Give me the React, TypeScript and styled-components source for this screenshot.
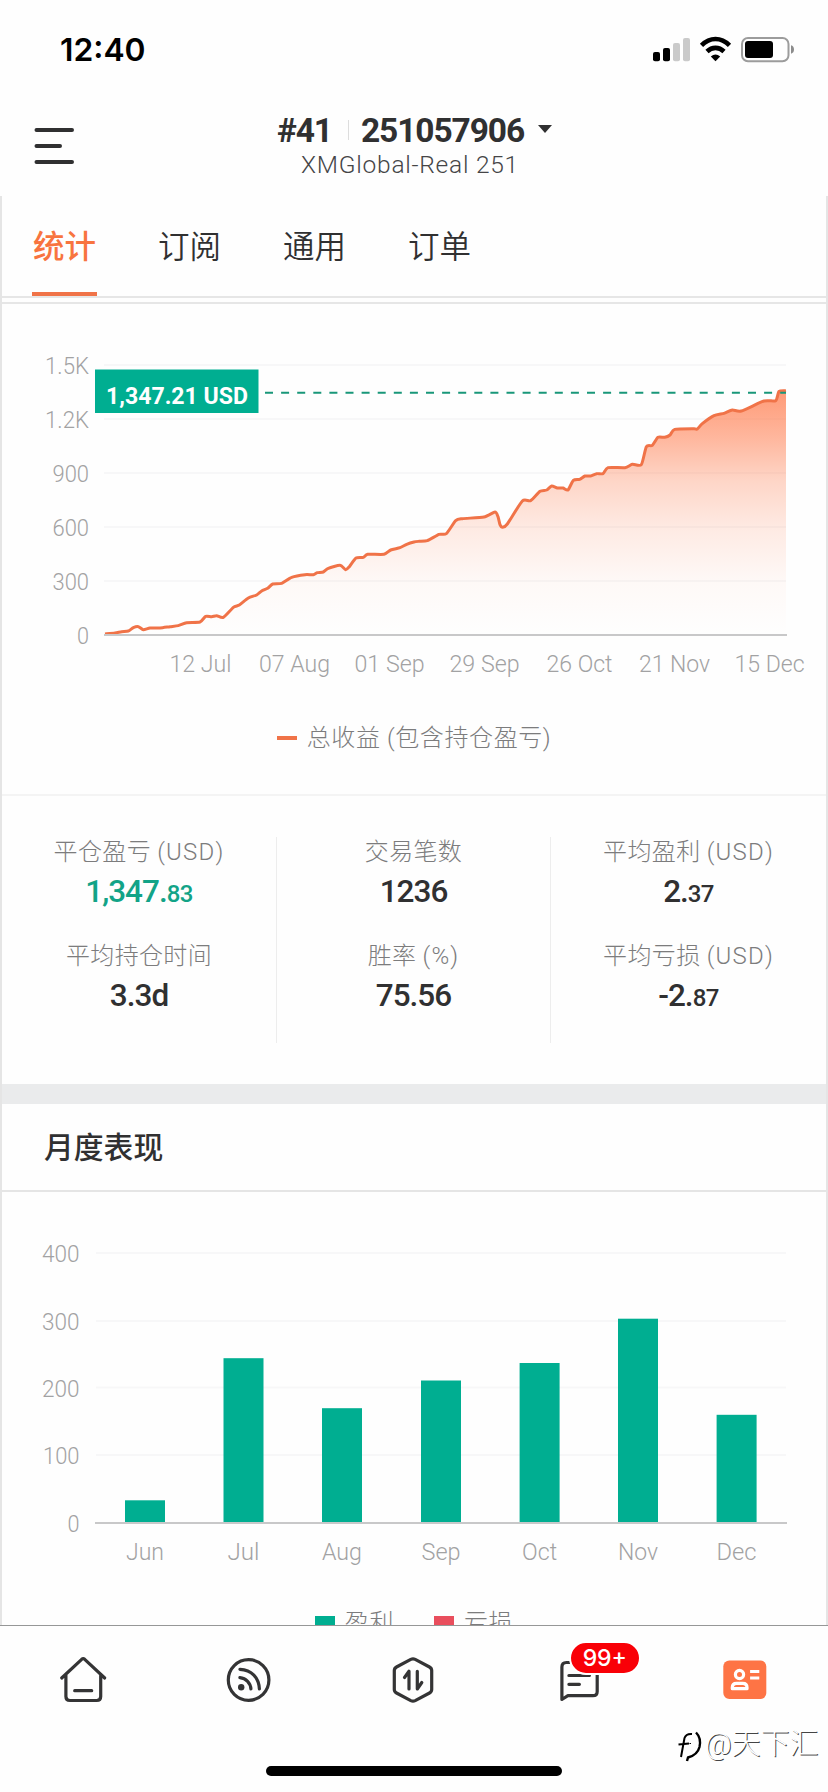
import React from "react";
import styled, { createGlobalStyle } from "styled-components";

const GREEN = "#00ae91";
const ORANGE = "#f07348";
const INK = "#303031";

const GlobalStyle = createGlobalStyle`
  * { box-sizing: border-box; }
  body {
    margin: 0;
    background: #fff;
    font-family: Roboto, "Noto Sans CJK SC", sans-serif;
    color: ${INK};
  }
`;

const Screen = styled.div`
  width: 828px;
  height: 1792px;
  display: flex;
  flex-direction: column;
  overflow: hidden;
  background: #fefefe;
`;

const StatusBar = styled.header`
  height: 98px;
  flex: none;
  display: flex;
  justify-content: space-between;
  padding: 30px 33px 0 60px;
`;

const Clock = styled.div`
  font: 600 31.8px/40px Inter, sans-serif;
  color: #000;
  letter-spacing: 0;
`;

const StatusIcons = styled.svg`
  width: 144px;
  height: 40px;
`;

const TitleBar = styled.div`
  height: 98px;
  flex: none;
  display: grid;
  grid-template-columns: 150px 1fr 150px;
`;

const MenuIcon = styled.svg`
  width: 48px;
  height: 44px;
  margin: 26px 0 0 30px;
`;

const Account = styled.div`
  display: flex;
  flex-direction: column;
  align-items: center;
  padding-top: 12px;
`;

const AccountLine = styled.div`
  display: flex;
  align-items: center;
  height: 40px;
  font-size: 33.5px;
  font-weight: 700;
  letter-spacing: -1.1px;
  padding-left: 1px;
  white-space: nowrap;
`;

const AccountDivider = styled.span`
  width: 1px;
  height: 20px;
  margin: 0 12px 0 16px;
  background: #ddd;
`;

const Caret = styled.svg`
  width: 14px;
  height: 8px;
  margin: -3px 0 0 14px;
`;

const Server = styled.div`
  font-size: 24.5px;
  line-height: 30px;
  font-weight: 300;
  color: #454547;
  letter-spacing: 0.75px;
  margin-right: 8px;
`;

const Panel = styled.main`
  flex: none;
  height: 1429px;
  overflow: hidden;
  border: solid #e5e5e5;
  border-width: 0 2px;
`;

const Tabs = styled.nav`
  height: 102px;
  display: flex;
  gap: 60px;
  padding-left: 30px;
  border-bottom: 2px solid #e6e6e6;
`;

const Tab = styled.div<{ $active?: boolean }>`
  width: 65px;
  height: 100px;
  padding-top: 28px;
  text-align: center;
  white-space: nowrap;
  font-size: 31.5px;
  line-height: 48px;
  font-weight: ${(p) => (p.$active ? 500 : 350)};
  color: ${(p) => (p.$active ? "#f8743f" : INK)};
  border-bottom: ${(p) => (p.$active ? `4px solid ${ORANGE}` : "none")};
`;

const ProfitSection = styled.section`
  margin-top: 4px;
  height: 494px;
  border-top: 2px solid #e6e6e6;
  border-bottom: 2px solid #f4f4f4;
`;

const ChartSvg = styled.svg`
  display: block;
  width: 824px;
  font-family: Roboto, sans-serif;
`;

const Legend = styled.div<{ $gap: number }>`
  display: flex;
  justify-content: center;
  align-items: center;
  gap: ${(p) => p.$gap}px;
  height: 38px;
  font-size: 24px;
  font-weight: 300;
  letter-spacing: 0.6px;
  color: #7c7c7d;
  line-height: 38px;
`;

const LegendItem = styled.div<{ $gap: number }>`
  display: flex;
  align-items: center;
  gap: ${(p) => p.$gap}px;
`;

const Swatch = styled.span<{ $color: string; $height: number }>`
  width: 20px;
  height: ${(p) => p.$height}px;
  background: ${(p) => p.$color};
`;

const Stats = styled.section`
  height: 288px;
  padding-top: 41px;
  display: grid;
  grid-template-columns: 274px 274px 276px;
`;

const StatColumn = styled.div`
  height: 206px;
  text-align: center;
  & + & {
    border-left: 1px solid #ededed;
  }
`;

const Stat = styled.div`
  height: 104px;
`;

const StatLabel = styled.div`
  font-size: 24px;
  line-height: 30px;
  font-weight: 300;
  letter-spacing: 0.35px;
  color: #7c7c7d;
`;

const Unit = styled.span`
  letter-spacing: 1.2px;
`;

const StatValue = styled.div<{ $positive?: boolean }>`
  margin-top: 5px;
  font-size: 31.5px;
  line-height: 40px;
  font-weight: 500;
  letter-spacing: -1px;
  color: ${(p) => (p.$positive ? "#12a387" : INK)};
  small {
    font-size: 24px;
    letter-spacing: -0.6px;
  }
`;

const MonthlyHeader = styled.h2`
  margin: 0;
  height: 108px;
  border-top: 20px solid #eaebec;
  border-bottom: 2px solid #e5e5e5;
  padding: 2px 0 0 42px;
  font-size: 29.8px;
  line-height: 84px;
  font-weight: 500;
`;

const BottomNav = styled.nav`
  flex: none;
  height: 141px;
  border-top: 1px solid #969797;
  display: grid;
  grid-template-columns: repeat(5, 1fr);
`;

const NavItem = styled.div`
  position: relative;
  height: 109px;
  display: flex;
  justify-content: center;
`;

const NavIcon = styled.svg`
  width: 60px;
  height: 60px;
  margin-top: 24px;
  fill: none;
  stroke: #343435;
  stroke-width: 3.2;
  stroke-linecap: round;
  stroke-linejoin: round;
`;

const Badge = styled.span`
  position: absolute;
  left: 72px;
  top: 15px;
  width: 72px;
  height: 34px;
  border: 2px solid #fff;
  border-radius: 17px;
  background: #f90007;
  color: #fff;
  font: 500 23px/30px Inter, sans-serif;
  text-align: center;
`;

const HomeIndicator = styled.div`
  width: 296px;
  height: 10px;
  border-radius: 5px;
  background: #000;
  align-self: center;
`;

const Watermark = styled.div`
  position: absolute;
  left: 674px;
  top: 1724px;
  display: flex;
  align-items: center;
  font-size: 29px;
  line-height: 40px;
  font-weight: 300;
  color: #fff;
  text-shadow: 1px 1px 0 #444;
  svg {
    width: 31px;
    height: 40px;
  }
`;

/* Equity curve, in thirds of a pixel. */
const CURVE: number[][] = [
  [315, 912], [345, 909], [365, 905], [385, 903], [400, 893], [415, 890], [430, 899], [450, 894],
  [480, 894], [510, 890], [535, 887], [560, 878], [600, 876], [617, 859], [635, 860], [650, 857],
  [670, 862], [700, 832], [718, 825], [745, 804], [770, 795], [785, 783], [803, 775], [818, 762],
  [845, 760], [875, 742], [915, 734], [940, 734], [952, 728], [970, 726], [985, 715], [1020, 706],
  [1037, 719], [1048, 710], [1068, 684], [1090, 682], [1103, 673], [1152, 673], [1172, 660],
  [1200, 653], [1220, 643], [1242, 636], [1257, 634], [1282, 632], [1317, 613], [1339, 611],
  [1367, 572], [1387, 566], [1452, 561], [1485, 546], [1494, 560], [1500, 584], [1508, 592],
  [1522, 582], [1567, 513], [1592, 512], [1620, 484], [1640, 480], [1655, 468], [1672, 474],
  [1689, 474], [1704, 480], [1720, 451], [1739, 448], [1755, 438], [1772, 438], [1790, 431],
  [1809, 431], [1824, 413], [1875, 413], [1897, 403], [1924, 404], [1939, 350], [1957, 346],
  [1974, 322], [1994, 322], [2010, 315], [2024, 298], [2082, 296], [2092, 297], [2107, 281],
  [2142, 257], [2172, 250], [2197, 240], [2224, 243], [2292, 213], [2327, 212], [2337, 184], [2358, 182],
];

function smooth(points: number[][]) {
  let d = `M${points[0][0]} ${points[0][1]}`;
  for (let i = 0; i < points.length - 1; i++) {
    const p0 = points[Math.max(0, i - 1)];
    const p1 = points[i];
    const p2 = points[i + 1];
    const p3 = points[Math.min(points.length - 1, i + 2)];
    const k = 0.11;
    d += `C${p1[0] + (p2[0] - p0[0]) * k} ${p1[1] + (p2[1] - p0[1]) * k} ${p2[0] - (p3[0] - p1[0]) * k} ${p2[1] - (p3[1] - p1[1]) * k} ${p2[0]} ${p2[1]}`;
  }
  return d;
}

const PROFIT_TICKS = [
  { y: 365, label: "1.5K", w: 44 },
  { y: 419, label: "1.2K", w: 44 },
  { y: 473, label: "900", w: 36.5 },
  { y: 527, label: "600", w: 36.5 },
  { y: 581, label: "300", w: 36.5 },
  { y: 635, label: "0", w: 12 },
];

const PROFIT_DATES = [
  { x: 200.5, label: "12 Jul", w: 62 },
  { x: 294.5, label: "07 Aug", w: 71 },
  { x: 389.5, label: "01 Sep", w: 70 },
  { x: 484.5, label: "29 Sep", w: 70 },
  { x: 579.5, label: "26 Oct", w: 66 },
  { x: 674.5, label: "21 Nov", w: 71 },
  { x: 769.5, label: "15 Dec", w: 70 },
];

function AxisText({ x, y, w, anchor, children }: { x: number; y: number; w: number; anchor: "end" | "middle"; children: string }) {
  return (
    <text x={x} y={y} textAnchor={anchor} textLength={w} lengthAdjust="spacingAndGlyphs" fontSize="24" fontWeight="300" fill="#a2a2a3">
      {children}
    </text>
  );
}

function ProfitChart() {
  const line = smooth(CURVE);
  return (
    <ChartSvg viewBox="2 304 824 415" height="415">
      <defs>
        <linearGradient id="equity" gradientUnits="userSpaceOnUse" x1="0" y1="182" x2="0" y2="915">
          <stop offset="0" stopColor="#ff7747" stopOpacity="0.74" />
          <stop offset="0.2" stopColor="#ff7747" stopOpacity="0.52" />
          <stop offset="0.37" stopColor="#ff7747" stopOpacity="0.3" />
          <stop offset="0.56" stopColor="#ff7747" stopOpacity="0.15" />
          <stop offset="0.78" stopColor="#ff7747" stopOpacity="0.04" />
          <stop offset="1" stopColor="#ff7747" stopOpacity="0" />
        </linearGradient>
      </defs>
      {PROFIT_TICKS.map((t) => (
        <g key={t.label}>
          {t.y !== 635 && <rect x="104" y={t.y - 1} width="682" height="2" fill="#f7f7f8" />}
          <AxisText x={89} y={t.y + 9} w={t.w} anchor="end">{t.label}</AxisText>
        </g>
      ))}
      <g transform="translate(0 330) scale(0.33333)">
        <path d={`${line}V915H315Z`} fill="url(#equity)" />
        <path d={line} fill="none" stroke={ORANGE} strokeWidth="9" strokeLinejoin="round" />
      </g>
      <rect x="104" y="634" width="683" height="2" fill="#c8c8c9" />
      <path d="M265 392.8H786" stroke="#199779" strokeWidth="2" strokeDasharray="8 8.1" />
      <rect x="95" y="369.5" width="163.5" height="43.5" fill={GREEN} />
      <text x="106" y="404.3" textLength="142" lengthAdjust="spacingAndGlyphs" fontSize="24" fontWeight="700" fill="#fff">1,347.21 USD</text>
      {PROFIT_DATES.map((d) => (
        <AxisText key={d.label} x={d.x} y={672} w={d.w} anchor="middle">{d.label}</AxisText>
      ))}
    </ChartSvg>
  );
}

const BAR_TICKS = [
  { y: 1253, label: "400", w: 37.5 },
  { y: 1321, label: "300", w: 37.5 },
  { y: 1387.5, label: "200", w: 37.5 },
  { y: 1455, label: "100", w: 36.5 },
  { y: 1523, label: "0", w: 12 },
];

const MONTHS = [
  { label: "Jun", x: 125, top: 1500.3, w: 38 },
  { label: "Jul", x: 223.5, top: 1358.2, w: 32 },
  { label: "Aug", x: 322, top: 1408.2, w: 40 },
  { label: "Sep", x: 421, top: 1380.5, w: 39 },
  { label: "Oct", x: 519.6, top: 1363, w: 35 },
  { label: "Nov", x: 618, top: 1318.7, w: 40 },
  { label: "Dec", x: 716.6, top: 1414.8, w: 40 },
];

function MonthlyChart() {
  return (
    <ChartSvg viewBox="2 1192 824 412" height="412">
      {BAR_TICKS.map((t) => (
        <g key={t.label}>
          {t.y !== 1523 && <rect x="96" y={t.y - 1} width="690" height="2" fill="#f7f7f8" />}
          <AxisText x={79.5} y={t.y + 9} w={t.w} anchor="end">{t.label}</AxisText>
        </g>
      ))}
      {MONTHS.map((m) => (
        <g key={m.label}>
          <rect x={m.x} y={m.top} width="40" height={1522 - m.top} fill={GREEN} />
          <AxisText x={m.x + 20} y={1560} w={m.w} anchor="middle">{m.label}</AxisText>
        </g>
      ))}
      <rect x="95" y="1522" width="692" height="2" fill="#c8c8c9" />
    </ChartSvg>
  );
}

function StatusGlyphs() {
  return (
    <StatusIcons viewBox="651 30 144 40">
      <rect x="653" y="52" width="7" height="9.3" rx="2" />
      <rect x="663" y="48" width="7" height="13.3" rx="2" />
      <rect x="673" y="43" width="7" height="18.3" rx="2" fill="#cacaca" />
      <rect x="683" y="38" width="7" height="23.3" rx="2" fill="#cacaca" />
      <g fill="none" stroke="#000" strokeWidth="4.6">
        <path d="M701.5 45.3C710 36.9 721 36.9 729.5 45.3" />
        <path d="M707 51.5C712 46.7 719 46.7 724 51.5" />
      </g>
      <path d="M710.8 56.4Q715.5 52.5 720.2 56.4L715.5 61.3Z" />
      <rect x="742" y="38" width="46.5" height="23.3" rx="6" fill="none" stroke="#9c9c9c" strokeWidth="2" />
      <rect x="745" y="41" width="28" height="17" rx="3" />
      <path d="M791 45.3Q794 46.2 794 49.5Q794 52.8 791 53.7Z" fill="#8c8c8c" />
    </StatusIcons>
  );
}

export default function App() {
  return (
    <>
      <GlobalStyle />
      <Screen>
        <StatusBar>
          <Clock>12:40</Clock>
          <StatusGlyphs />
        </StatusBar>
        <TitleBar>
          <MenuIcon viewBox="30 124 48 44" stroke={INK} strokeWidth="4" strokeLinecap="round">
            <path d="M36.5 130H72M36.5 146H60M36.5 162H72" />
          </MenuIcon>
          <Account>
            <AccountLine>
              <span>#41</span>
              <AccountDivider />
              <span>251057906</span>
              <Caret viewBox="0 0 14 8"><path d="M0 0H14L7 8Z" fill={INK} /></Caret>
            </AccountLine>
            <Server>XMGlobal-Real 251</Server>
          </Account>
        </TitleBar>

        <Panel>
          <Tabs>
            <Tab $active>统计</Tab>
            <Tab>订阅</Tab>
            <Tab>通用</Tab>
            <Tab>订单</Tab>
          </Tabs>
          <ProfitSection>
            <ProfitChart />
            <Legend $gap={0}>
              <LegendItem $gap={10}>
                <Swatch $color={ORANGE} $height={4} />
                总收益 (包含持仓盈亏)
              </LegendItem>
            </Legend>
          </ProfitSection>
          <Stats>
            <StatColumn>
              <Stat>
                <StatLabel>平仓盈亏 <Unit>(USD)</Unit></StatLabel>
                <StatValue $positive>1,347.<small>83</small></StatValue>
              </Stat>
              <Stat>
                <StatLabel>平均持仓时间</StatLabel>
                <StatValue>3.3d</StatValue>
              </Stat>
            </StatColumn>
            <StatColumn>
              <Stat>
                <StatLabel>交易笔数</StatLabel>
                <StatValue>1236</StatValue>
              </Stat>
              <Stat>
                <StatLabel>胜率 <Unit>(%)</Unit></StatLabel>
                <StatValue>75.56</StatValue>
              </Stat>
            </StatColumn>
            <StatColumn>
              <Stat>
                <StatLabel>平均盈利 <Unit>(USD)</Unit></StatLabel>
                <StatValue>2.<small>37</small></StatValue>
              </Stat>
              <Stat>
                <StatLabel>平均亏损 <Unit>(USD)</Unit></StatLabel>
                <StatValue>-2.<small>87</small></StatValue>
              </Stat>
            </StatColumn>
          </Stats>
          <MonthlyHeader>月度表现</MonthlyHeader>
          <MonthlyChart />
          <Legend $gap={40}>
            <LegendItem $gap={10}><Swatch $color={GREEN} $height={14} />盈利</LegendItem>
            <LegendItem $gap={10}><Swatch $color="#e94e5d" $height={14} />亏损</LegendItem>
          </Legend>
        </Panel>

        <BottomNav>
          <NavItem>
            <NavIcon viewBox="52.8 1650 60 60">
              <path d="M61.5 1678L81.5 1659.3Q83 1658 84.5 1659.3L104.5 1678M65.7 1675V1696.5Q65.7 1700.5 69.7 1700.5H96.5Q100.5 1700.5 100.5 1696.5V1675M74.5 1690.7H91.5" />
            </NavIcon>
          </NavItem>
          <NavItem>
            <NavIcon viewBox="218.4 1650 60 60">
              <circle cx="249" cy="1680" r="20.3" />
              <path d="M240.3 1669.3C252 1669.8 259.3 1677.5 259.8 1689M240.3 1677.7C246.5 1678.2 251 1683 251.3 1689" />
              <circle cx="241.6" cy="1687.3" r="3.2" fill="#343435" stroke="none" />
            </NavIcon>
          </NavItem>
          <NavItem>
            <NavIcon viewBox="384 1650 60 60">
              <path d="M410.8 1659.4Q413 1658.3 415.2 1659.4L429.5 1667Q431.7 1668.2 431.7 1670.5V1689.5Q431.7 1691.8 429.5 1693L415.2 1700.6Q413 1701.7 410.8 1700.6L396.5 1693Q394.3 1691.8 394.3 1689.5V1670.5Q394.3 1668.2 396.5 1667Z" />
              <path d="M404.5 1677.5L409 1671.3V1689M417.3 1671.3V1689L421.8 1682.5" />
            </NavIcon>
          </NavItem>
          <NavItem>
            <NavIcon viewBox="549.6 1650 60 60">
              <path d="M567 1662.5H566Q561.5 1662.5 561.5 1667V1699.5L567.5 1695.7H592.5Q596.8 1695.7 596.8 1691.4V1667Q596.8 1662.5 592.5 1662.5ZM568.5 1675.5H589M568.5 1684.3H579" />
            </NavIcon>
            <Badge>99+</Badge>
          </NavItem>
          <NavItem>
            <NavIcon viewBox="715.2 1650 60 60">
              <rect x="723.5" y="1660.5" width="43" height="38.5" rx="6" fill="#fe7445" stroke="none" />
              <g stroke="#fff" strokeLinecap="butt">
                <circle cx="739.7" cy="1674.5" r="4.1" />
                <path d="M732.5 1688.7V1687.5Q732.5 1683.3 736.7 1683.3H743Q747.2 1683.3 747.2 1687.5V1688.7Z" />
                <path d="M750.3 1671.5H759.5M750.3 1678H759.5" />
              </g>
            </NavIcon>
          </NavItem>
        </BottomNav>
        <HomeIndicator />
        <Watermark>
          <svg viewBox="674 1724 31 40" fill="none" strokeLinecap="butt">
            <path d="M681 1757L684.5 1738Q686 1733.5 692 1734M678.5 1744.5L689 1743.5" stroke="#000" strokeWidth="2" />
            <path d="M696 1732.5Q701.5 1738 699.5 1747Q697.5 1755 688 1757.5L687 1761" stroke="#000" strokeWidth="2.4" />
            <path d="M689.5 1743.5H691" stroke="#000" strokeWidth="1" />
          </svg>
          @天下汇
        </Watermark>
      </Screen>
    </>
  );
}
